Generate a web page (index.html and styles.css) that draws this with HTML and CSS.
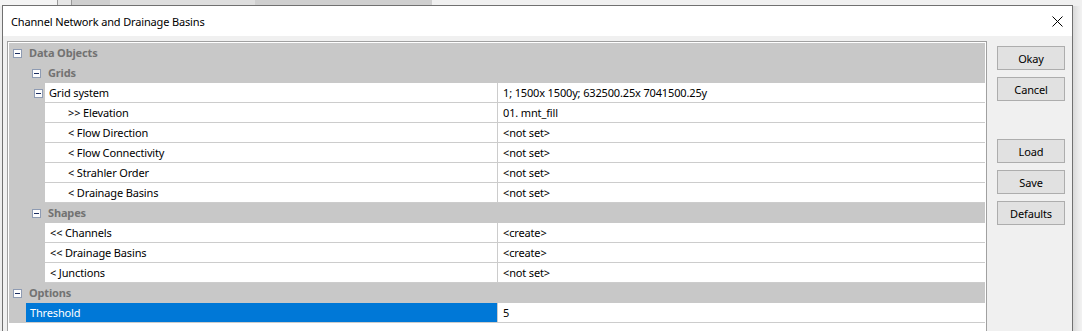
FILE: index.html
```html
<!DOCTYPE html>
<html>
<head>
<meta charset="utf-8">
<link rel="stylesheet" href="styles.css">
</head>
<body>
<div class="desktop">
  <div class="bg-strip">
    <div class="bg-a"></div>
    <div class="bg-lines"></div>
    <div class="bg-bar"><div class="bg-bar-light"></div></div>
    <div class="bg-b"></div>
  </div>
  <div class="shadow"></div>

  <div class="dialog">
    <div class="titlebar">
      <span class="title">Channel Network and Drainage Basins</span>
      <svg class="close" width="11" height="11" viewBox="0 0 11 11"><path d="M0.5 0.5 L10.5 10.5 M10.5 0.5 L0.5 10.5" stroke="#000" stroke-width="1" fill="none"/></svg>
    </div>
    <div class="client">
      <div class="pgrid">
        <div class="cat lvl0"><span class="exp"></span><span class="cat-text">Data Objects</span></div>
        <div class="cat lvl1"><span class="exp"></span><span class="cat-text">Grids</span></div>

        <div class="row">
          <div class="name"><div class="gut g36"><span class="exp exp-node"></span></div><div class="label t49">Grid system</div></div>
          <div class="val">1; 1500x 1500y; 632500.25x 7041500.25y</div>
        </div>
        <div class="row">
          <div class="name"><div class="gut g36"></div><div class="label t68">&gt;&gt; Elevation</div></div>
          <div class="val">01. mnt_fill</div>
        </div>
        <div class="row">
          <div class="name"><div class="gut g36"></div><div class="label t68">&lt; Flow Direction</div></div>
          <div class="val">&lt;not set&gt;</div>
        </div>
        <div class="row">
          <div class="name"><div class="gut g36"></div><div class="label t68">&lt; Flow Connectivity</div></div>
          <div class="val">&lt;not set&gt;</div>
        </div>
        <div class="row">
          <div class="name"><div class="gut g36"></div><div class="label t68">&lt; Strahler Order</div></div>
          <div class="val">&lt;not set&gt;</div>
        </div>
        <div class="row">
          <div class="name"><div class="gut g36"></div><div class="label t68">&lt; Drainage Basins</div></div>
          <div class="val">&lt;not set&gt;</div>
        </div>

        <div class="cat lvl1"><span class="exp"></span><span class="cat-text">Shapes</span></div>

        <div class="row">
          <div class="name"><div class="gut g36"></div><div class="label t50">&lt;&lt; Channels</div></div>
          <div class="val">&lt;create&gt;</div>
        </div>
        <div class="row">
          <div class="name"><div class="gut g36"></div><div class="label t50">&lt;&lt; Drainage Basins</div></div>
          <div class="val">&lt;create&gt;</div>
        </div>
        <div class="row">
          <div class="name"><div class="gut g36"></div><div class="label t50">&lt; Junctions</div></div>
          <div class="val">&lt;not set&gt;</div>
        </div>

        <div class="cat lvl0"><span class="exp"></span><span class="cat-text">Options</span></div>

        <div class="row">
          <div class="name"><div class="gut g17"></div><div class="label sel">Threshold</div></div>
          <div class="val">5</div>
        </div>
      </div>

      <div class="buttons">
        <div class="btn">Okay</div>
        <div class="btn">Cancel</div>
        <div class="btn gap-top">Load</div>
        <div class="btn">Save</div>
        <div class="btn">Defaults</div>
      </div>
    </div>
  </div>
</div>
</body>
</html>
```

FILE: styles.css
```css
* { box-sizing: border-box; }
html, body { margin: 0; padding: 0; }
body {
  width: 1082px;
  height: 331px;
  overflow: hidden;
  font-family: "Noto Sans", "Open Sans", sans-serif;
  font-size: 11px;
  letter-spacing: -0.15px;
  color: #000;
  background: #f3f3f3;
}
.desktop {
  position: relative;
  width: 1082px;
  height: 331px;
  overflow: hidden;
  background: #ededed;
}
.bg-strip {
  display: flex;
  height: 6px;
  background: #f0f0f0;
}
.bg-a { width: 57px; background: #f4f4f4; }
.bg-lines {
  width: 15px;
  border-left: 1px solid #9a9a9a;
  border-right: 1px solid #9a9a9a;
  background: #e6e6e6;
}
.bg-bar {
  width: 360px;
  background: #cfcfcf;
  padding-left: 38px;
}
.bg-bar-light { width: 145px; height: 6px; background: #dedede; }
.bg-b { flex: 1; background: #f0f0f0; }

.shadow {
  position: absolute;
  left: 1072px;
  top: 6px;
  width: 10px;
  height: 325px;
  background: linear-gradient(to right, #d6d6d6, #ececec 70%, #f2f2f2);
}

.dialog {
  position: absolute;
  left: 2px;
  top: 5px;
  width: 1071px;
  height: 340px;
  border: 1px solid #707070;
  background: #f0f0f0;
  display: flex;
  flex-direction: column;
}
.titlebar {
  height: 30px;
  background: #fff;
  display: flex;
  align-items: center;
  justify-content: space-between;
  padding: 0 9px 0 8px;
  flex: none;
}
.title { color: #000; }
.close { display: block; margin-top: 1px; }

.client {
  display: flex;
  align-items: flex-start;
  padding: 5px 0 0 4px;
  flex: 1;
}

.pgrid {
  width: 980px;
  height: 300px;
  border: 1px solid #a0a0a0;
  padding: 1px;
  background: #fff;
  flex: none;
}

.cat {
  height: 20px;
  background: #c8c8c8;
  display: flex;
  align-items: center;
}
.cat.lvl0 { padding-left: 4px; }
.cat.lvl1 { padding-left: 23px; }
.cat-text {
  font-weight: bold;
  color: #727272;
  margin-left: 7px;
  line-height: 20px;
}
.exp {
  width: 9px;
  height: 9px;
  border: 1px solid #8e9bb3;
  background: #fdfdfd;
  position: relative;
  flex: none;
}
.exp::after {
  content: "";
  position: absolute;
  left: 1px;
  top: 3px;
  width: 5px;
  height: 1px;
  background: #1c2f63;
}

.row {
  display: grid;
  grid-template-columns: 488px 1fr;
  height: 20px;
}
.name { display: flex; height: 20px; }
.gut {
  background: #c8c8c8;
  height: 20px;
  flex: none;
  display: flex;
  align-items: center;
}
.g36 { width: 36px; padding-left: 25px; }
.g17 { width: 17px; }
.label {
  flex: 1;
  height: 20px;
  line-height: 19px;
  border-bottom: 1px solid #cccccc;
  background: #fff;
  white-space: nowrap;
}
.t49 { padding-left: 4px; }
.t68 { padding-left: 23px; }
.t50 { padding-left: 5px; }
.label.sel {
  background: #0078d7;
  color: #fff;
  padding-left: 4px;
}
.val {
  height: 20px;
  line-height: 19px;
  border-left: 1px solid #cccccc;
  border-bottom: 1px solid #cccccc;
  padding-left: 5px;
  white-space: nowrap;
}

.buttons {
  display: flex;
  flex-direction: column;
  gap: 7px;
  margin-left: 10px;
  padding-top: 5px;
}
.btn {
  width: 68px;
  height: 24px;
  border: 1px solid #adadad;
  background: #e1e1e1;
  display: flex;
  align-items: center;
  justify-content: center;
}
.btn.gap-top { margin-top: 31px; }
```
